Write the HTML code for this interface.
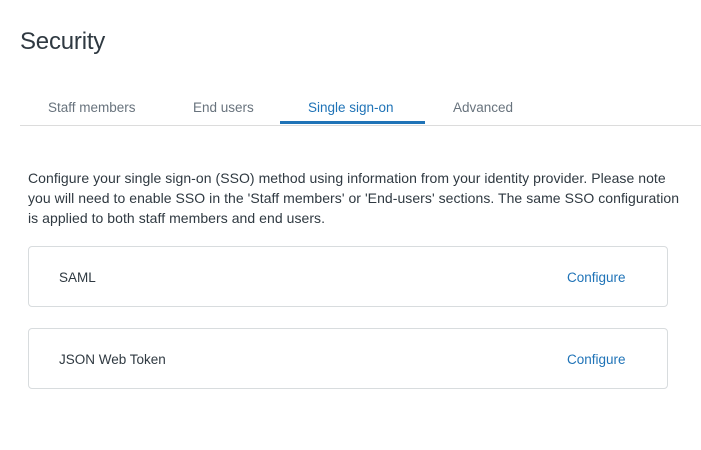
<!DOCTYPE html>
<html><head><style>
*{margin:0;padding:0;box-sizing:border-box}
body{width:701px;height:450px;background:#fff;font-family:"Liberation Sans",sans-serif;color:#2f3941;position:relative;overflow:hidden}
h1{position:absolute;left:20px;top:28px;font-size:24px;font-weight:normal;color:#2f3941;letter-spacing:-0.2px}
.tab{position:absolute;top:100px;font-size:13.5px;color:#68737d;white-space:nowrap}
.line{position:absolute;left:20px;right:0;top:125px;height:1px;background:#dcdcdc}
.ul{position:absolute;left:280px;width:145px;top:121px;height:3px;background:#1f73b7}
.p{position:absolute;left:28px;top:168px;font-size:14px;line-height:20px;color:#2f3941;white-space:nowrap;letter-spacing:0.05px}
.card{position:absolute;left:28px;width:640px;height:61px;border:1px solid #d8dcde;border-radius:4px}
.card .n{position:absolute;left:30px;top:23px;font-size:13.5px}
.card .c{position:absolute;left:538px;top:23px;font-size:13.5px;color:#1f73b7}
</style></head><body>
<h1>Security</h1>
<div class="tab" style="left:48px">Staff members</div>
<div class="tab" style="left:193px">End users</div>
<div class="tab" style="left:308px;color:#1f73b7">Single sign-on</div>
<div class="tab" style="left:453px">Advanced</div>
<div class="line"></div>
<div class="ul"></div>
<div class="p">Configure your single sign-on (SSO) method using information from your identity provider. Please note<br>you will need to enable SSO in the 'Staff members' or 'End-users' sections. The same SSO configuration<br>is applied to both staff members and end users.</div>
<div class="card" style="top:246px"><span class="n">SAML</span><span class="c">Configure</span></div>
<div class="card" style="top:328px"><span class="n">JSON Web Token</span><span class="c">Configure</span></div>
</body></html>
